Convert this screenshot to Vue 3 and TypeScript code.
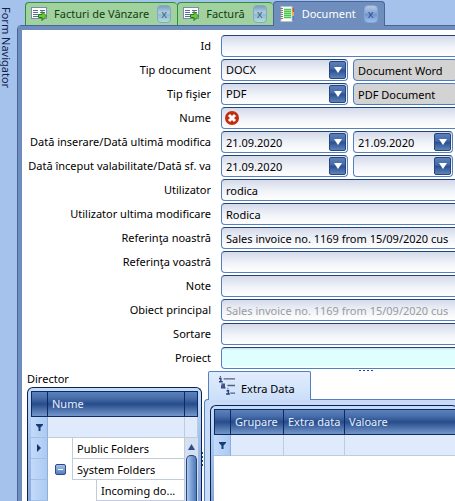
<script setup lang="ts">
import { ref } from 'vue'

interface Field {
  id: string
  label: string
  kind: 'text' | 'choice' | 'error' | 'dates' | 'muted' | 'project'
  value: string
  extra?: string
}

interface Folder {
  name: string
  level: number
  expandable?: boolean
  current?: boolean
}

const tabs = [
  { title: 'Facturi de Vânzare', active: false },
  { title: 'Factură', active: false },
  { title: 'Document', active: true },
]

const invoice = 'Sales invoice no. 1169 from 15/09/2020 cus'

const fields = ref<Field[]>([
  { id: 'id', label: 'Id', kind: 'text', value: '' },
  { id: 'doc-type', label: 'Tip document', kind: 'choice', value: 'DOCX', extra: 'Document Word' },
  { id: 'file-type', label: 'Tip fişier', kind: 'choice', value: 'PDF', extra: 'PDF Document' },
  { id: 'name', label: 'Nume', kind: 'error', value: '' },
  { id: 'inserted', label: 'Dată inserare/Dată ultimă modifica', kind: 'dates', value: '21.09.2020', extra: '21.09.2020' },
  { id: 'valid', label: 'Dată început valabilitate/Dată sf. va', kind: 'dates', value: '21.09.2020', extra: '' },
  { id: 'user', label: 'Utilizator', kind: 'text', value: 'rodica' },
  { id: 'last-user', label: 'Utilizator ultima modificare', kind: 'text', value: 'Rodica' },
  { id: 'our-ref', label: 'Referinţa noastră', kind: 'text', value: invoice },
  { id: 'your-ref', label: 'Referinţa voastră', kind: 'text', value: '' },
  { id: 'note', label: 'Note', kind: 'text', value: '' },
  { id: 'main-object', label: 'Obiect principal', kind: 'muted', value: invoice },
  { id: 'sort', label: 'Sortare', kind: 'text', value: '' },
  { id: 'project', label: 'Proiect', kind: 'project', value: '' },
])

const folders: Folder[] = [
  { name: 'Public Folders', level: 1, current: true },
  { name: 'System Folders', level: 1, expandable: true },
  { name: 'Incoming do...', level: 2 },
]
</script>

<template>
  <div class="app">
    <aside class="side"><span>Form Navigator</span></aside>
    <div class="work">
      <nav class="tabs">
        <div v-for="tab in tabs" :key="tab.title" class="tab" :class="{ active: tab.active }">
          <svg v-if="!tab.active" class="tab-icon" viewBox="0 0 16 16" aria-hidden="true">
            <rect x="0.5" y="1.5" width="15" height="11" fill="#fff" stroke="#7d8ba8" />
            <path d="M2 4.5h5M2 6.5h5M2 8.5h5M2 10.5h5M9 4.5h5M9 6.5h5" stroke="#5a6c98" />
            <path d="M7.500 8.500h3.500v-3l4.500 4.500-4.500 4.500v-3H7.500z" fill="#69cf2f" stroke="#227b16" />
          </svg>
          <svg v-else class="tab-icon" viewBox="0 0 16 16" aria-hidden="true">
            <path d="M13 2h2v4h-2z" fill="#d94b3a" />
            <path d="M13 6h2v4h-2z" fill="#e8b13c" />
            <path d="M13 10h2v4h-2z" fill="#477fd0" />
            <rect x="2" y="0.500" width="11" height="15" fill="#fff" stroke="#b9c3b9" />
            <path d="M5 3.500h7M5 5.500h7M5 7.500h7M5 9.500h7M5 11.500h7" stroke="#46c846" stroke-width="1.500" />
            <path d="M1 2.500h3M1 4.500h3M1 6.500h3M1 8.500h3M1 10.500h3M1 12.500h3" stroke="#7b7f86" />
          </svg>
          <a href="#" class="tab-title">{{ tab.title }}</a>
          <button type="button" class="close" :aria-label="'Close ' + tab.title">x</button>
        </div>
      </nav>

      <main class="page">
        <form class="form" @submit.prevent>
          <div v-for="field in fields" :key="field.id" class="row">
            <label :for="field.id">{{ field.label }}</label>
            <div class="controls">
              <template v-if="field.kind === 'choice'">
                <div class="box first">
                  <select :id="field.id" v-model="field.value">
                    <option>{{ field.value }}</option>
                  </select>
                  <span class="drop"><svg viewBox="0 0 8 6"><path d="M0 0h8L4 6z" fill="#fff" /></svg></span>
                </div>
                <div class="box grey grow">
                  <input v-model="field.extra" readonly :aria-label="field.label" />
                </div>
              </template>
              <template v-else-if="field.kind === 'dates'">
                <div class="box first">
                  <input :id="field.id" v-model="field.value" />
                  <button type="button" class="drop" :aria-label="field.label">
                    <svg viewBox="0 0 8 6"><path d="M0 0h8L4 6z" fill="#fff" /></svg>
                  </button>
                </div>
                <div class="box second">
                  <input v-model="field.extra" :aria-label="field.label" />
                  <button type="button" class="drop" :aria-label="field.label">
                    <svg viewBox="0 0 8 6"><path d="M0 0h8L4 6z" fill="#fff" /></svg>
                  </button>
                </div>
              </template>
              <div v-else class="box grow" :class="field.kind">
                <svg v-if="field.kind === 'error'" class="error-icon" viewBox="0 0 14 14" aria-hidden="true">
                  <circle cx="7" cy="7" r="7" fill="#c22d10" />
                  <path d="M4 4l6 6M10 4l-6 6" stroke="#fff" stroke-width="3" />
                </svg>
                <input :id="field.id" v-model="field.value" :disabled="field.kind === 'muted'" />
              </div>
            </div>
          </div>
        </form>

        <section class="lower">
          <div class="director">
            <h2>Director</h2>
            <div class="frame">
              <table class="grid">
                <colgroup><col class="c-mark" /><col /><col class="c-scroll" /></colgroup>
                <thead>
                  <tr><th></th><th>Nume</th><th></th></tr>
                </thead>
                <tbody>
                  <tr class="filter">
                    <td class="mark"><svg class="funnel" viewBox="0 0 7 7"><path d="M0 0h7v1L4.500 3.500V7h-2V3.500L0 1z" fill="#173a78" /></svg></td>
                    <td></td>
                    <td></td>
                  </tr>
                  <tr v-for="(folder, i) in folders" :key="folder.name" class="item">
                    <td class="mark"><svg v-if="folder.current" class="pointer" viewBox="0 0 4 8"><path d="M0 0l4 4-4 4z" fill="#12346e" /></svg></td>
                    <td class="tree">
                      <div class="node">
                        <span v-for="n in folder.level" :key="n" class="indent">
                          <button v-if="folder.expandable" type="button" class="toggle" aria-label="Collapse"></button>
                        </span>
                        <span class="node-name">{{ folder.name }}</span>
                      </div>
                    </td>
                    <td v-if="i === 0" class="scroll" :rowspan="folders.length">
                      <div class="track">
                        <svg class="up" viewBox="0 0 7 6"><path d="M3.500 0L7 6H0z" fill="#2d4c8c" /></svg>
                        <div class="thumb"></div>
                      </div>
                    </td>
                  </tr>
                </tbody>
              </table>
            </div>
          </div>

          <div class="split-v"><i></i></div>

          <div class="extra">
            <div class="split-h"><i></i></div>
            <a href="#" class="extra-tab">
              <svg viewBox="0 0 19 20" aria-hidden="true">
                <path d="M6 2.500h12M10 9.500h8M13 17.500h5" stroke="#52607c" stroke-width="1.500" />
                <path d="M1 2h2v3M1 5.500h4M2 0h1M3.500 8h3v4M6 10H4v2h4M9 15h2v3M8.500 18.500h4M10 13h1" fill="none" stroke="#2b3f7c" stroke-width="1.500" />
              </svg>
              <span>Extra Data</span>
            </a>
            <div class="extra-panel">
              <div class="frame">
                <table class="grid">
                  <colgroup><col class="c-mark" /><col class="c-group" /><col class="c-data" /><col /></colgroup>
                  <thead>
                    <tr><th></th><th>Grupare</th><th>Extra data</th><th>Valoare</th></tr>
                  </thead>
                  <tbody>
                    <tr class="filter">
                      <td class="mark"><svg class="funnel" viewBox="0 0 7 7"><path d="M0 0h7v1L4.500 3.500V7h-2V3.500L0 1z" fill="#173a78" /></svg></td>
                      <td></td>
                      <td></td>
                      <td></td>
                    </tr>
                  </tbody>
                </table>
              </div>
            </div>
          </div>
        </section>
      </main>
    </div>
  </div>
</template>

<style>
body {
  margin: 0;
  overflow: hidden;
}
</style>

<style scoped>
* {
  box-sizing: border-box;
}
.app {
  display: flex;
  height: 100vh;
  overflow: hidden;
  background: #a4c2ec;
  color: #000;
  font: 11px/16px "Noto Sans", "Open Sans", sans-serif;
}
input,
select,
button {
  font: inherit;
  color: inherit;
}
a {
  color: inherit;
  text-decoration: none;
}
.side {
  flex: none;
  width: 17px;
  padding-top: 7px;
}
.side span {
  display: block;
  width: 12px;
  writing-mode: vertical-rl;
  line-height: 12px;
  white-space: nowrap;
  color: #10204a;
}
.work {
  flex: 1;
  min-width: 0;
  display: flex;
  flex-direction: column;
}
.tabs {
  display: flex;
  flex: none;
  height: 25px;
  padding-left: 8px;
  align-items: flex-end;
}
.tab {
  display: flex;
  align-items: center;
  height: 23px;
  padding: 0 6px 0 5px;
  border: 1px solid #2c9136;
  border-right: 0;
  border-bottom: 0;
  border-radius: 4px 4px 0 0;
  background: #a1d19e;
  color: #0f4012;
}
.tab.active {
  z-index: 1;
  height: 25px;
  margin-bottom: -1px;
  padding-bottom: 1px;
  border: 1px solid #47659a;
  border-bottom: 0;
  background: #6f8ebd;
  color: #fff;
}
.tab-icon {
  width: 16px;
  height: 16px;
}
.tab-title {
  padding: 0 8px 0 7px;
}
.close {
  width: 14px;
  height: 18px;
  padding: 0;
  border: 1px solid #86a7c9;
  border-radius: 4px;
  background: linear-gradient(#7d9fc0, #b5d3df 45%, #8fb9cf 50%, #b0dcd8);
  color: #3c648c;
  line-height: 14px;
}
.active .close {
  background: linear-gradient(#b5c9e6, #88a7d5 45%, #6c92cc 50%, #9dbdf0);
  color: #2c4e8c;
}
.page {
  flex: 1;
  min-height: 0;
  display: flex;
  flex-direction: column;
  margin: 0 -8px -5px 0;
  padding: 4px;
  border: 1px solid #47659a;
  border-radius: 4px 0 0 0;
  background: #fff;
  box-shadow: inset 0 0 0 4px #6f8ebd;
}
.form {
  display: flex;
  flex-direction: column;
  flex: none;
  gap: 2px;
  padding: 5px 0 0 5px;
}
.row {
  display: flex;
  gap: 10px;
  height: 22px;
}
.row label {
  flex: none;
  width: 184px;
  overflow: hidden;
  white-space: nowrap;
  text-align: right;
  line-height: 22px;
}
.controls {
  flex: 1;
  min-width: 0;
  display: flex;
  gap: 5px;
}
.box {
  display: flex;
  align-items: center;
  height: 22px;
  min-width: 0;
  border: 1px solid #5580c0;
  border-top-color: #25417a;
  border-radius: 4px;
  background: linear-gradient(#d3daea, #eef1f7 50%, #fff);
}
.grow {
  flex: 1;
}
.first {
  width: 127px;
}
.second {
  width: 100px;
}
.box input,
.box select {
  flex: 1;
  width: 0;
  min-width: 0;
  height: 20px;
  padding: 0 4px;
  border: 0;
  outline: 0;
  background: transparent;
  appearance: none;
}
.box.grey {
  border-color: #4a7bc8;
  background: #d3d3d3;
}
.box.muted input {
  color: #9a9a9e;
}
.box.project {
  background: linear-gradient(#cbdce6, #dfffff 12%, #dfffff 88%, #fff);
}
.error-icon {
  width: 14px;
  height: 14px;
  margin-left: 3px;
}
.drop {
  display: flex;
  align-items: center;
  justify-content: center;
  flex: none;
  width: 17px;
  height: 18px;
  margin-right: 1px;
  padding: 0;
  border: 1px solid #27467f;
  border-radius: 2px;
  background: linear-gradient(#5b80b8, #4369a8 45%, #2a4e90 50%, #5c84bc);
  pointer-events: none;
}
.drop svg {
  width: 8px;
  height: 6px;
}
.lower {
  flex: 1;
  min-height: 0;
  display: flex;
  padding-left: 5px;
}
.director {
  flex: none;
  display: flex;
  flex-direction: column;
  width: 175px;
  padding-top: 2px;
}
h2 {
  margin: 0;
  height: 16px;
  font-size: 11px;
  font-weight: 400;
}
.frame {
  flex: 1;
  min-height: 0;
  overflow: hidden;
  padding: 3px;
  padding-bottom: 0;
  border: 1px solid #0d2050;
  border-bottom: 0;
  border-radius: 6px 6px 0 0;
  background: linear-gradient(#c2dcfb, #9dbde8 60px, #86a8da);
}
.grid {
  width: 100%;
  table-layout: fixed;
  border-collapse: separate;
  border-spacing: 0;
  background: #fff;
}
.c-mark {
  width: 17px;
}
.c-scroll {
  width: 13px;
}
.c-group {
  width: 53px;
}
.c-data {
  width: 61px;
}
th {
  height: 26px;
  padding: 0 0 0 4px;
  border: 1px solid #0f2a60;
  border-left: 0;
  background: linear-gradient(#5c82bb, #486fab 25%, #284c8b 50%, #7397cb);
  color: #e3eefc;
  font-weight: 400;
  text-align: left;
  white-space: nowrap;
}
th:first-child {
  border-left: 1px solid #0f2a60;
}
td {
  height: 21px;
  padding: 0;
}
.filter td {
  background: #dfebfc;
  border-right: 1px solid #c0cbdb;
  border-bottom: 1px solid #c0cbdb;
}
.grid .mark {
  border-right: 1px solid #8eafdc;
  border-bottom: 1px solid #a3bfe6;
  background: linear-gradient(90deg, #c3dafa, #adcaf2);
  text-align: center;
  line-height: 1px;
}
.funnel {
  width: 7px;
  height: 7px;
}
.pointer {
  width: 4px;
  height: 8px;
}
.node {
  display: flex;
  height: 21px;
}
.indent {
  display: flex;
  align-items: center;
  justify-content: center;
  flex: none;
  width: 24px;
}
.toggle {
  display: flex;
  align-items: center;
  justify-content: center;
  width: 11px;
  height: 11px;
  padding: 0;
  border: 1px solid #2c4c88;
  border-radius: 2px;
  background: linear-gradient(#a4c0ea, #557fc0);
}
.toggle::before {
  content: "";
  width: 5px;
  height: 1px;
  background: #fff;
}
.node-name {
  flex: 1;
  padding-left: 4px;
  border: 1px solid #c0cbdb;
  border-top: 0;
  line-height: 21px;
  white-space: nowrap;
}
.scroll {
  vertical-align: top;
  background: #d5e1f1;
}
.track {
  display: flex;
  flex-direction: column;
  align-items: center;
  height: 63px;
}
.up {
  flex: none;
  width: 7px;
  height: 6px;
  margin: 6px 0 5px;
}
.thumb {
  flex: 1;
  width: 11px;
  border: 1px solid #26457e;
  border-bottom: 0;
  border-radius: 5px 5px 0 0;
  background: linear-gradient(90deg, #b0cbf0, #7fa3d6 45%, #4f78b7);
}
.split-v {
  flex: none;
  display: flex;
  width: 2px;
  padding-top: 83px;
}
.split-v i {
  width: 1px;
  height: 15px;
  background: repeating-linear-gradient(#27457f 0 2px, transparent 2px 4px);
}
.extra {
  flex: 1;
  min-width: 0;
  display: flex;
  flex-direction: column;
}
.split-h {
  flex: none;
  height: 2px;
  padding: 1px 0 0 155px;
}
.split-h i {
  display: block;
  width: 14px;
  height: 1px;
  background: repeating-linear-gradient(90deg, #27457f 0 2px, transparent 2px 4px);
}
.extra-tab {
  display: flex;
  align-items: center;
  flex: none;
  gap: 5px;
  width: 103px;
  height: 29px;
  margin: 0 0 -1px 4px;
  padding-left: 9px;
  border: 1px solid #5580c0;
  border-bottom: 0;
  border-radius: 2px 2px 0 0;
  background: linear-gradient(#e2edfc, #cbdffa);
  white-space: nowrap;
  z-index: 1;
}
.extra-tab svg {
  width: 18px;
  height: 20px;
}
.extra-tab span {
  padding-top: 6px;
}
.extra-panel {
  flex: 1;
  min-height: 0;
  display: flex;
  padding: 5px 0 0 5px;
  border: 1px solid #5580c0;
  border-right: 0;
  border-bottom: 0;
  border-radius: 4px 0 0 0;
  background: #c8dcf8;
}
.extra-panel .frame {
  border-right: 0;
  padding-right: 0;
}
.extra-panel .frame::after {
  content: "";
  display: block;
  height: 100%;
  background: #fff;
}
</style>
